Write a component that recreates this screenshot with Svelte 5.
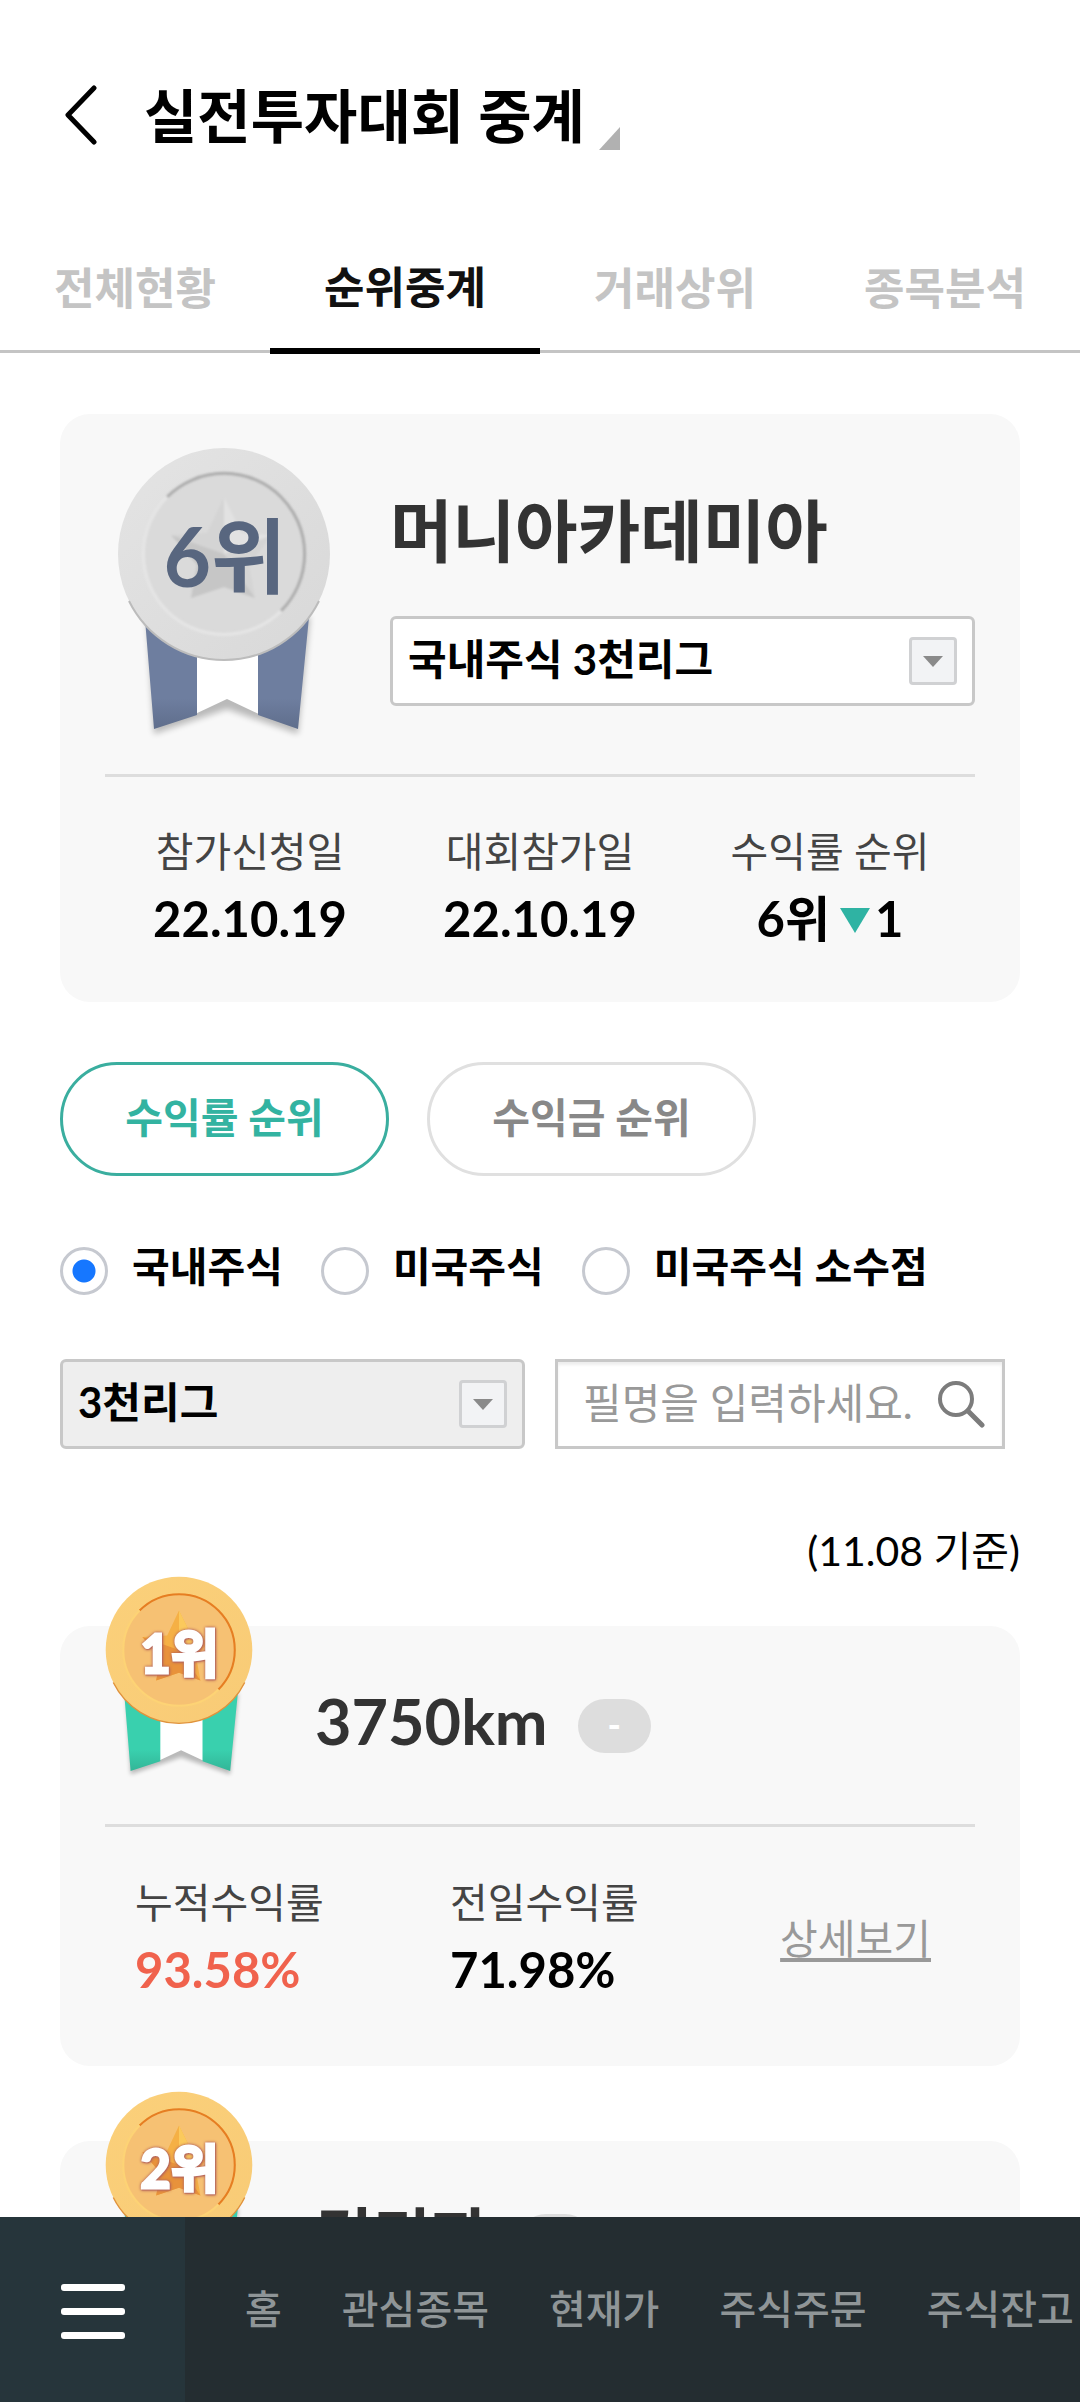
<script lang="ts">
	const tabs = ['전체현황', '순위중계', '거래상위', '종목분석'];
	const sorts = ['수익률 순위', '수익금 순위'];
	const markets = ['국내주식', '미국주식', '미국주식 소수점'];
	const menus = ['홈', '관심종목', '현재가', '주식주문', '주식잔고'];

	const ranks = [
		{ rank: 1, name: '3750km', change: '-', total: '93.58%', daily: '71.98%' },
		{ rank: 2, name: '김민자' }
	];

	let tab = $state(1);
	let sort = $state(0);
	let market = $state('국내주식');
	let nickname = $state('');
</script>

<!-- medal: silver for my own rank, gold for the ranking list -->
{#snippet medal(rank: number, kind: string)}
	<svg class="medal {kind}" viewBox="0 0 214 292" role="img" aria-label="{rank}위">
		<defs>
			<linearGradient id="rim-{kind}{rank}" x1="0" y1="0" x2="1" y2="1">
				<stop offset="0" class="rim-a" />
				<stop offset="1" class="rim-b" />
			</linearGradient>
			<linearGradient id="ribbon-{kind}{rank}" x1="0" y1="0" x2="0" y2="1">
				<stop offset="0.75" class="ribbon-a" />
				<stop offset="1" class="ribbon-b" />
			</linearGradient>
			<filter id="soft-{kind}{rank}" x="-20%" y="-20%" width="140%" height="140%">
				<feGaussianBlur stdDeviation="3" />
			</filter>
			<filter id="fine-{kind}{rank}" x="-20%" y="-20%" width="140%" height="140%">
				<feGaussianBlur stdDeviation="1" />
			</filter>
		</defs>
		<path class="shade" filter="url(#soft-{kind}{rank})" d="M30 170L37 287L110 262L181 287L193 170Z" />
		<path fill="#fff" d="M76 190H144V268L110 252L76 268Z" />
		<path fill="url(#ribbon-{kind}{rank})" d="M27 160L37 282L80 268V190ZM193 160L181 282L141 268V190Z" />
		<circle cx="107" cy="107" r="106" fill="url(#rim-{kind}{rank})" />
		<path class="edge" d="M12 154A106 106 0 0 0 202 154" fill="none" stroke-width="2" />
		<circle class="face" cx="107" cy="107" r="81" />
		<g filter="url(#fine-{kind}{rank})">
			<path class="inner-dark" d="M50 50A80.6 80.6 0 1 1 164 164" fill="none" stroke-width="3" />
			<path class="inner-light" d="M50 50A80.6 80.6 0 0 0 164 164" fill="none" stroke-width="3" />
			<path class="star" d="M107 50L125 86L155 88L132 118L138 151L107 140L74 151L80 118L54 88L90 86Z" />
			<path class="star-light" d="M107 50L125 86L155 88L107 107Z" />
			<path class="star-dark" d="M54 88L107 107L74 151L80 118ZM107 107L138 151L107 140L74 151Z" />
		</g>
		<text x="108" y="140" text-anchor="middle">{rank}위</text>
	</svg>
{/snippet}

<div class="app">
	<div class="scroll">
		<header>
			<button class="back" aria-label="이전">
				<svg viewBox="0 0 36 60" width="36" height="60">
					<path d="M32 3L6 30L32 57" fill="none" stroke="#000" stroke-width="5" stroke-linecap="round" stroke-linejoin="round" />
				</svg>
			</button>
			<h1>실전투자대회 중계</h1>
			<svg class="corner" viewBox="0 0 21 23" width="21" height="23" aria-hidden="true">
				<path d="M21 0V23H0Z" fill="#b1b1b1" />
			</svg>
		</header>

		<nav class="tabs">
			{#each tabs as name, i}
				<button class:active={i === tab} onclick={() => (tab = i)}>{name}</button>
			{/each}
		</nav>

		<main>
			<section class="card mine">
				<div class="profile">
					{@render medal(6, 'silver')}
					<div class="who">
						<h2>머니아카데미아</h2>
						<div class="select">
							<select aria-label="리그">
								<option>국내주식 3천리그</option>
							</select>
							<span class="drop"></span>
						</div>
					</div>
				</div>
				<dl class="facts">
					<div>
						<dt>참가신청일</dt>
						<dd>22.10.19</dd>
					</div>
					<div>
						<dt>대회참가일</dt>
						<dd>22.10.19</dd>
					</div>
					<div>
						<dt>수익률 순위</dt>
						<dd>6위<i class="down"></i>1</dd>
					</div>
				</dl>
			</section>

			<div class="pills">
				{#each sorts as name, i}
					<button class:active={i === sort} onclick={() => (sort = i)}>{name}</button>
				{/each}
			</div>

			<div class="radios">
				{#each markets as name}
					<label>
						<input type="radio" name="market" value={name} bind:group={market} />
						<span>{name}</span>
					</label>
				{/each}
			</div>

			<div class="filters">
				<div class="select gray">
					<select aria-label="리그 선택">
						<option>3천리그</option>
					</select>
					<span class="drop"></span>
				</div>
				<div class="search">
					<input type="text" aria-label="필명" placeholder="필명을 입력하세요." bind:value={nickname} />
					<button aria-label="검색">
						<svg viewBox="0 0 48 48" width="48" height="48">
							<circle cx="19" cy="19" r="16" fill="none" stroke="#7c7c7c" stroke-width="4" />
							<path d="M31 31L45 45" stroke="#7c7c7c" stroke-width="5" stroke-linecap="round" />
						</svg>
					</button>
				</div>
			</div>

			<p class="date">(11.08 기준)</p>

			{#each ranks as r}
				<article class="card rank">
					<div class="top">
						{@render medal(r.rank, 'gold')}
						<h3>{r.name}</h3>
						<span class="badge">{r.change}</span>
					</div>
					{#if r.total}
						<div class="rates">
							<dl>
								<dt>누적수익률</dt>
								<dd class="up">{r.total}</dd>
							</dl>
							<dl>
								<dt>전일수익률</dt>
								<dd>{r.daily}</dd>
							</dl>
							<a href="#detail">상세보기</a>
						</div>
					{/if}
				</article>
			{/each}
		</main>
	</div>

	<nav class="bottom">
		<button class="menu" aria-label="전체메뉴"><i></i><i></i><i></i></button>
		<div class="links">
			{#each menus as name}
				<a href="#menu">{name}</a>
			{/each}
		</div>
	</nav>
</div>

<style>
	:global(body) {
		background: #fff;
	}

	.app,
	.app * {
		box-sizing: border-box;
		margin: 0;
	}

	.app {
		display: flex;
		flex-direction: column;
		height: 100vh;
		font-family: Lato, 'Noto Sans CJK KR', sans-serif;
		color: #000;
	}

	button,
	input,
	select {
		font: inherit;
		color: inherit;
		padding: 0;
		border: 0;
		background: none;
	}

	.scroll {
		flex: 1;
		min-height: 0;
		overflow-y: auto;
		scrollbar-width: none;
	}

	header {
		display: flex;
		align-items: center;
		height: 230px;
		padding-left: 62px;
	}

	.back {
		display: flex;
		margin-right: 46px;
	}

	h1 {
		padding-top: 2px;
		font-size: 58px;
		font-weight: 700;
		line-height: 80px;
	}

	.corner {
		align-self: flex-end;
		margin: 0 0 80px 14px;
	}

	.tabs {
		display: grid;
		grid-template-columns: repeat(4, 1fr);
		height: 124px;
		background: linear-gradient(#c4c4c4, #c4c4c4) 0 120px / 100% 3px no-repeat;
	}

	.tabs button {
		padding-bottom: 6px;
		font-size: 44px;
		font-weight: 700;
		color: #c4c4c4;
		border-bottom: 6px solid transparent;
	}

	.tabs .active {
		padding-bottom: 8px;
		color: #111;
		border-color: #000;
	}

	main {
		padding: 60px 60px 40px;
	}

	.card {
		background: #f8f8f8;
		border-radius: 30px;
		padding: 0 45px;
	}

	.medal {
		display: block;
		flex: none;
		overflow: visible;
	}

	.medal text {
		font-size: 82px;
		font-weight: 700;
	}

	.shade {
		fill: #000;
		opacity: 0.25;
	}

	.silver {
		width: 214px;
		height: 292px;
	}

	.silver .rim-a { stop-color: #e4e4e4; }
	.silver .rim-b { stop-color: #d8d8d8; }
	.silver .ribbon-a { stop-color: #6e7e9f; }
	.silver .ribbon-b { stop-color: #5f6e8c; }
	.silver .edge { stroke: #bcbcbc; }
	.silver .face { fill: #dadada; }
	.silver .inner-dark { stroke: #adadad; }
	.silver .inner-light { stroke: #e6e6e6; }
	.silver .star { fill: #d4d4d4; }
	.silver .star-light { fill: #e2e2e2; }
	.silver .star-dark { fill: #c6c6c6; }
	.silver text { fill: #58667f; }

	.gold {
		width: 148px;
		height: 202px;
	}

	.gold .rim-a { stop-color: #fbd07a; }
	.gold .rim-b { stop-color: #f8cb76; }
	.gold .ribbon-a { stop-color: #39d0ae; }
	.gold .ribbon-b { stop-color: #33b597; }
	.gold .edge { stroke: #e0923c; }
	.gold .face { fill: #f6c173; }
	.gold .inner-dark { stroke: #e67e22; }
	.gold .inner-light { stroke: #fdd375; }
	.gold .star { fill: #f5b045; }
	.gold .star-light { fill: #fbc95c; }
	.gold .star-dark { fill: #e8923a; }

	.gold text {
		fill: #fff;
		font-size: 76px;
		stroke: #fff;
		stroke-width: 4px;
		filter: drop-shadow(0 0 2px #b5655a) drop-shadow(1px 1px 1px #b5655a);
	}

	.mine {
		height: 588px;
	}

	.profile {
		display: flex;
		gap: 59px;
		height: 363px;
		padding: 33px 0 0 12px;
		border-bottom: 3px solid #ddd;
	}

	.who {
		flex: 1;
	}

	h2 {
		height: 169px;
		padding-top: 34px;
		font-size: 68px;
		font-weight: 700;
		line-height: 100px;
		color: #333;
	}

	.select {
		position: relative;
		height: 90px;
	}

	select {
		appearance: none;
		width: 100%;
		height: 90px;
		padding: 0 80px 4px 15px;
		border: 3px solid #c8c8c8;
		border-radius: 6px;
		background: #fff;
		font-size: 42px;
		font-weight: 700;
	}

	.gray select {
		background: #eee;
	}

	.drop {
		position: absolute;
		top: 21px;
		right: 18px;
		width: 48px;
		height: 48px;
		border: 3px solid #d0d1d3;
		border-radius: 4px;
		background: #f2f3f5;
		pointer-events: none;
	}

	.drop::after {
		content: '';
		position: absolute;
		top: 16px;
		left: 11px;
		border: 10px solid transparent;
		border-top: 11px solid #8a8a8a;
		border-bottom: 0;
	}

	dt {
		font-size: 41px;
		line-height: 66px;
		color: #444;
	}

	dd {
		font-size: 49px;
		font-weight: 700;
		line-height: 66px;
	}

	.facts {
		display: grid;
		grid-template-columns: repeat(3, 1fr);
		padding-top: 42px;
		text-align: center;
	}

	.down {
		display: inline-block;
		margin: 0 5px 0 10px;
		vertical-align: 4px;
		border: 15px solid transparent;
		border-top: 25px solid #2fb3a3;
		border-bottom: 0;
	}

	.pills {
		display: flex;
		gap: 38px;
		margin-top: 60px;
	}

	.pills button {
		width: 329px;
		height: 114px;
		padding-bottom: 8px;
		border: 3px solid #e0e0e0;
		border-radius: 57px;
		font-size: 41px;
		font-weight: 700;
		color: #888;
	}

	.pills .active {
		border-color: #3aae9f;
		color: #33b3a1;
	}

	.radios {
		display: flex;
		gap: 38px;
		height: 60px;
		margin-top: 65px;
	}

	.radios label {
		display: flex;
		align-items: center;
		gap: 24px;
	}

	.radios span {
		font-size: 41px;
		font-weight: 700;
		line-height: 60px;
		padding-bottom: 8px;
	}

	.radios input {
		appearance: none;
		width: 48px;
		height: 48px;
		border: 3px solid #c6c9d0;
		border-radius: 50%;
	}

	.radios input:checked {
		background: radial-gradient(circle, #1677ff 11px, transparent 12px);
	}

	.filters {
		display: grid;
		grid-template-columns: minmax(0, 31fr) minmax(0, 30fr);
		gap: 30px;
		margin-top: 58px;
		padding-right: 15px;
	}

	.search {
		display: flex;
		align-items: center;
		height: 90px;
		padding: 0 17px 0 25px;
		border: 3px solid #c8c8c8;
		box-shadow: inset 0 3px 3px #eee;
	}

	.search input {
		flex: 1;
		min-width: 0;
		height: 84px;
		padding-bottom: 3px;
		font-size: 42px;
		outline: 0;
	}

	.search input::placeholder {
		color: #999;
		opacity: 1;
	}

	.search button {
		display: flex;
	}

	.date {
		margin-top: 69px;
		font-size: 41px;
		line-height: 66px;
		text-align: right;
	}

	.rank {
		height: 440px;
		margin-top: 75px;
	}

	.date + .rank {
		margin-top: 42px;
	}

	.top {
		display: flex;
		height: 201px;
		border-bottom: 3px solid #ddd;
	}

	.top .medal {
		margin: -50px 62px 0 0;
	}

	h3 {
		padding-top: 50px;
		font-size: 63px;
		font-weight: 700;
		line-height: 90px;
		color: #333;
	}

	.badge {
		width: 73px;
		height: 54px;
		margin: 73px 0 0 30px;
		border-radius: 27px;
		background: #ddd;
		color: #fff;
		font-size: 36px;
		font-weight: 900;
		line-height: 50px;
		text-align: center;
	}

	.rates {
		display: grid;
		grid-template-columns: 315px 1fr auto;
		align-items: center;
		padding: 43px 44px 0 30px;
	}

	.rates a {
		font-size: 41px;
		color: #999;
		text-underline-offset: 4px;
		text-decoration-thickness: 4px;
	}

	.up {
		color: #f0624d;
	}

	.bottom {
		display: flex;
		flex: none;
		height: 185px;
		background: #242d31;
	}

	.menu {
		display: flex;
		flex-direction: column;
		align-items: center;
		justify-content: center;
		gap: 17px;
		flex: none;
		width: 185px;
		padding-top: 3px;
		background: #26353b;
	}

	.menu i {
		width: 64px;
		height: 7px;
		border-radius: 3px;
		background: #fff;
	}

	.links {
		display: flex;
		align-items: center;
		gap: 60px;
		padding: 0 0 6px 60px;
		overflow: hidden;
		white-space: nowrap;
	}

	.links a {
		font-size: 40px;
		font-weight: 500;
		color: #8f9597;
		text-decoration: none;
	}
</style>
